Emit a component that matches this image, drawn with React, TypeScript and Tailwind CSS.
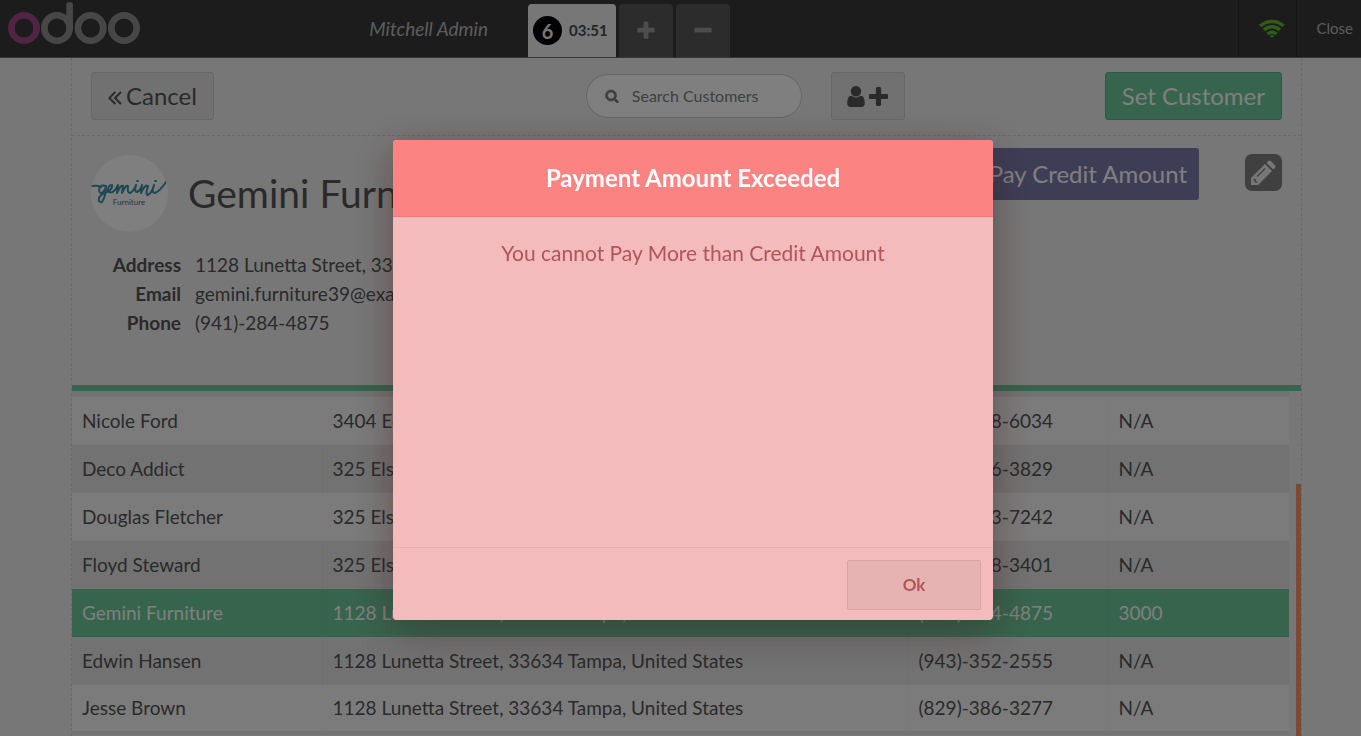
import React from 'react';

const plusPath =
  'M1600 736v192q0 40-28 68t-68 28h-416v416q0 40-28 68t-68 28h-192q-40 0-68-28t-28-68v-416h-416q-40 0-68-28t-28-68v-192q0-40 28-68t68-28h416v-416q0-40 28-68t68-28h192q40 0 68 28t28 68v416h416q40 0 68 28t28 68z';
const minusPath =
  'M1600 736v192q0 40-28 68t-68 28h-1216q-40 0-68-28t-28-68v-192q0-40 28-68t68-28h1216q40 0 68 28t28 68z';
const searchPath =
  'M1216 832q0-185-131.5-316.5t-316.5-131.5-316.5 131.5-131.5 316.5 131.5 316.5 316.5 131.5 316.5-131.5 131.5-316.5zm512 832q0 52-38 90t-90 38q-54 0-90-38l-343-342q-179 124-399 124-143 0-273.5-55.5t-225-150-150-225-55.5-273.5 55.5-273.5 150-225 225-150 273.5-55.5 273.5 55.5 225 150 150 225 55.5 273.5q0 220-124 399l343 343q37 37 37 90z';
const userPath =
  'M1536 1399q0 109-62.5 187t-150.5 78h-854q-88 0-150.5-78t-62.5-187q0-85 8.5-160.5t31.5-152 58.5-131 94-89 134.5-34.5q131 128 313 128t313-128q76 0 134.5 34.5t94 89 58.5 131 31.5 152 8.5 160.5zm-256-887q0 159-112.5 271.5t-271.5 112.5-271.5-112.5-112.5-271.5 112.5-271.5 271.5-112.5 271.5 112.5 112.5 271.5z';

function Glyph({ d, className, box = '0 0 1792 1792' }: { d: string; className: string; box?: string }) {
  return (
    <svg viewBox={box} fill="currentColor" className={className} aria-hidden="true">
      <path d={d} />
    </svg>
  );
}

function Logo() {
  return (
    <svg viewBox="0 0 134 46" className="h-[46px] w-[134px]" fill="none" strokeWidth="6.6" role="img" aria-label="odoo">
      <circle cx="16" cy="28" r="12.7" stroke="#a24689" />
      <g stroke="#8f8f8f">
        <circle cx="49" cy="28" r="12.7" />
        <path d="M61.6 28V5.3" strokeLinecap="round" />
        <circle cx="82.6" cy="28" r="12.7" />
        <circle cx="116" cy="28" r="12.7" />
      </g>
    </svg>
  );
}

const customers = [
  { name: 'Nicole Ford', address: '3404 Edgewood Road, 72401 Jonesboro, United States', phone: '(946)-638-6034', credit: 'N/A' },
  { name: 'Deco Addict', address: '325 Elsie Drive, 26807 Franklin, United States', phone: '(603)-996-3829', credit: 'N/A' },
  { name: 'Douglas Fletcher', address: '325 Elsie Drive, 26807 Franklin, United States', phone: '(132)-553-7242', credit: 'N/A' },
  { name: 'Floyd Steward', address: '325 Elsie Drive, 26807 Franklin, United States', phone: '(145)-138-3401', credit: 'N/A' },
  { name: 'Gemini Furniture', address: '1128 Lunetta Street, 33634 Tampa, United States', phone: '(941)-284-4875', credit: '3000' },
  { name: 'Edwin Hansen', address: '1128 Lunetta Street, 33634 Tampa, United States', phone: '(943)-352-2555', credit: 'N/A' },
  { name: 'Jesse Brown', address: '1128 Lunetta Street, 33634 Tampa, United States', phone: '(829)-386-3277', credit: 'N/A' },
];

function TopBar() {
  return (
    <header className="flex h-[58px] shrink-0 border-b border-[#6a6a6a] bg-[#393939] text-[#b8b8b8]">
      <div className="flex flex-1 pl-2">
        <Logo />
        <span className="ml-auto pr-10 text-[19px] leading-[57px] italic">Mitchell Admin</span>
      </div>
      <nav className="flex w-[710px] items-end gap-[3px]">
        <button className="flex h-[53px] w-[88px] items-center gap-[7px] rounded-t-[4px] bg-[#eeeeee] pl-[5px] text-[15px] font-bold text-[#4a4a4a]">
          <span className="flex size-[29px] items-center justify-center rounded-full bg-black text-[20px] text-[#eee]">6</span>
          <span>03:51</span>
        </button>
        <button aria-label="New order" className="flex h-[53px] w-[54px] items-center justify-center rounded-t-[4px] bg-[#595959] text-[#9a9a9a]">
          <Glyph d={plusPath} className="size-[22px]" />
        </button>
        <button aria-label="Remove order" className="flex h-[53px] w-[54px] items-center justify-center rounded-t-[4px] bg-[#595959] text-[#9a9a9a]">
          <Glyph d={minusPath} className="size-[22px]" />
        </button>
      </nav>
      <div className="flex w-[59px] items-center justify-center border-x border-[#292929] pl-2">
        <svg viewBox="0 0 26 19" className="h-[19px] w-[26px]" fill="none" stroke="#5fb82c" strokeWidth="3.5" role="img" aria-label="Connected">
          <path d="M1.300 7.100A17 17 0 0 1 24.700 7.100M5 11.100A11.500 11.500 0 0 1 21 11.100M8.600 15A6.300 6.300 0 0 1 17.400 15" />
          <path d="M10.800 16.800Q13 15 15.200 16.800L13 19z" fill="#5fb82c" stroke="none" />
        </svg>
      </div>
      <button className="w-16 pr-2 text-right text-[15px]">Close</button>
    </header>
  );
}

function Toolbar() {
  return (
    <div className="flex h-[78px] shrink-0 items-start border-b border-dashed border-[#d0d0d0] px-[19px] pt-[14px]">
      <button className="flex h-12 items-center gap-1 rounded-[3px] border border-[#cfcfcf] bg-[#e2e2e2] px-4 text-[24px]">
        <svg viewBox="0 0 14 14" className="mt-1 size-[14px]" fill="none" stroke="currentColor" strokeWidth="2" aria-hidden="true">
          <path d="M7.300 1 1.300 7 7.300 13M13 1 7 7l6 6" />
        </svg>
        Cancel
      </button>
      <div className="mr-[200px] ml-auto flex items-center gap-[29px]">
        <label className="flex h-11 w-[216px] items-center gap-[13px] rounded-full border border-[#cccccc] bg-white px-[18px] text-[#808080]">
          <Glyph d={searchPath} className="size-[14px] shrink-0 stroke-current stroke-100" />
          <input aria-label="Search Customers" placeholder="Search Customers" className="w-full min-w-0 bg-transparent text-[16px] outline-none placeholder:text-[#808080]" />
        </label>
        <button aria-label="Add customer" className="flex h-12 w-[74px] items-center justify-center gap-1 rounded-[3px] border border-[#cfcfcf] bg-[#e2e2e2]">
          <Glyph d={userPath} box="256 128 1280 1536" className="h-[21px] w-[18px]" />
          <Glyph d={plusPath} box="192 128 1408 1408" className="size-[19px]" />
        </button>
      </div>
      <button className="h-12 rounded-[3px] border border-[#5fb28a] bg-[#6ec89b] px-4 text-[24px] text-white">Set Customer</button>
    </div>
  );
}

function Avatar() {
  return (
    <div className="flex size-[77px] items-center justify-center overflow-hidden rounded-full bg-white">
      <svg viewBox="0 0 77 77" className="size-[77px]" role="img" aria-label="Gemini Furniture">
        <path
          d="M1 31Q6 30 10 32M15 31Q10 29 8 34Q8 40 12 37Q15 34 15 31Q15 41 11 47Q7 48 8 43Q10 39 16 37Q22 34 21 30Q17 30 17 35Q19 40 24 35L27 30L26 38Q30 29 32 31L31 38Q35 29 37 31Q36 38 39 38Q43 36 45 30Q43 37 46 37Q50 35 51 30L50 38Q54 29 57 31Q54 40 57 40Q61 38 63 30Q60 38 64 38Q69 36 75 27"
          fill="none" stroke="#3d91a5" strokeWidth="2" strokeLinecap="round" strokeLinejoin="round"
        />
        <path d="M46 26h1M64 26h1" stroke="#3d91a5" strokeWidth="2" strokeLinecap="round" />
        <text x="38" y="50" textAnchor="middle" fontSize="8" fill="#666">Furniture</text>
      </svg>
    </div>
  );
}

function Details() {
  const rows = [
    ['Address', '1128 Lunetta Street, 33634 Tampa, United States'],
    ['Email', 'gemini.furniture39@example.com'],
    ['Phone', '(941)-284-4875'],
  ];
  return (
    <section className="flex h-[255px] shrink-0 flex-col border-b-6 border-[#6ec89b] px-[19px]">
      <div className="flex items-start pt-3">
        <div className="flex items-center gap-5 pt-[7px]">
          <Avatar />
          <h1 className="text-[39px] leading-none">Gemini Furniture</h1>
        </div>
        <button className="ml-auto h-13 rounded-[3px] bg-[#7c7bad] px-3 text-[24px] text-white">Pay Credit Amount</button>
        <button aria-label="Edit customer" className="mt-[6px] ml-[46px] flex size-[37px] items-center justify-center rounded-[7px] bg-[#808080]">
          <svg viewBox="0 0 25 25" className="size-[25px]" fill="#eeeeee" aria-hidden="true">
            <path d="M0 25V18L14 4L21 11L7 25zM15.500 2.800L17.300 1Q18.500-.2 19.800 1L24 5.200Q25.200 6.500 24 7.700L22.200 9.500z" />
            <path d="M6 16.500 14 8.500M2.500 19.500l1.700.3.200 2 2 .5" fill="none" stroke="#808080" strokeWidth="1.300" />
          </svg>
        </button>
      </div>
      <dl className="mt-[18px] text-[19px] leading-[29px]">
        {rows.map(([label, value]) => (
          <div key={label} className="flex gap-[14px]">
            <dt className="w-[90px] text-right font-bold">{label}</dt>
            <dd>{value}</dd>
          </div>
        ))}
      </dl>
    </section>
  );
}

function CustomerTable() {
  return (
    <div className="flex min-h-0 flex-1 items-start overflow-hidden">
      <table className="mr-[7px] w-full table-fixed border-collapse border-b-4 border-[#e4e4e4] text-left text-[19px]">
        <colgroup>
          <col className="w-[250px]" />
          <col />
          <col className="w-[200px]" />
          <col className="w-[181px]" />
        </colgroup>
        <thead>
          <tr className="h-[6px] bg-[#e4e4e4]"><td colSpan={4} /></tr>
        </thead>
        <tbody>
          {customers.map((c) => (
            <tr
              key={c.name}
              className={
                c.name === 'Gemini Furniture'
                  ? 'h-12 bg-[#6ec89b] text-white'
                  : 'h-12 odd:bg-[#f7f7f7] even:bg-[#e4e4e4]'
              }
            >
              <td className="px-[10px]">{c.name}</td>
              <td className="border-l border-black/2 px-[10px]">{c.address}</td>
              <td className="border-l border-black/2 px-[10px]">{c.phone}</td>
              <td className="border-l border-black/2 px-[10px]">{c.credit}</td>
            </tr>
          ))}
        </tbody>
      </table>
      <div className="mt-[93px] w-[5px] shrink-0 self-stretch bg-[#f4956c]" />
    </div>
  );
}

function ErrorDialog() {
  return (
    <div className="fixed inset-0 flex items-center justify-center bg-black/50 pt-6 pl-[25px]">
      <div
        role="alertdialog"
        aria-labelledby="dialog-title"
        aria-describedby="dialog-text"
        className="flex h-[480px] w-[600px] flex-col overflow-hidden rounded-[4px] bg-[#f4bbbc] text-center text-[#b0555a] shadow-[0_10px_40px_rgba(60,20,20,0.4)]"
      >
        <h2 id="dialog-title" className="border-b border-[#ee797a] bg-[#fb8483] text-[24px] leading-[76px] font-bold text-white">
          Payment Amount Exceeded
        </h2>
        <p id="dialog-text" className="flex-1 pt-5 text-[21px] leading-8">You cannot Pay More than Credit Amount</p>
        <footer className="flex justify-end border-t border-[#e9aeaf] px-3 pt-3 pb-[10px]">
          <button className="h-[50px] w-[134px] rounded-[2px] border border-[#d9a3a3] bg-[#e7b2b2] text-[17px] font-bold">Ok</button>
        </footer>
      </div>
    </div>
  );
}

export default function App() {
  return (
    <div className="flex h-screen flex-col overflow-hidden bg-[#eeeeee] font-[Lato,sans-serif] text-[#555555]">
      <TopBar />
      <main className="mr-[59px] ml-[71px] flex min-h-0 flex-1 flex-col border-x border-dashed border-[#d4d4d4]">
        <Toolbar />
        <Details />
        <CustomerTable />
      </main>
      <ErrorDialog />
    </div>
  );
}
